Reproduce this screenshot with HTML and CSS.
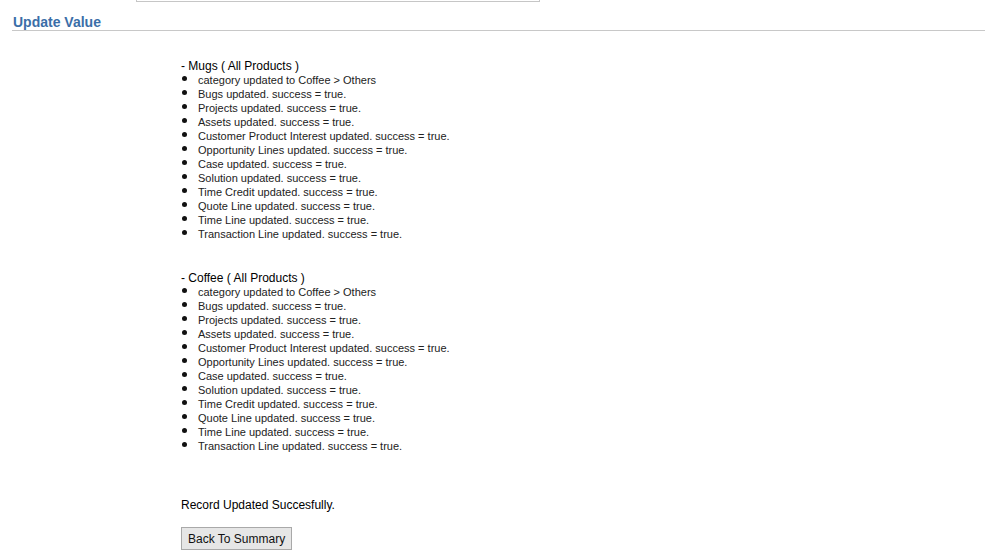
FILE: index.html
```html
<!DOCTYPE html>
<html lang="en">

<head>
    <meta charset="UTF-8">
    <title>Update Value</title>
    <link rel="stylesheet" href="styles.css">
</head>

<body>
    <div class="top_box"></div>

    <h2 class="section_title">Update Value</h2>

    <div class="results">
        <div class="product">
            <p class="product_name">- Mugs ( All Products )</p>
            <ul class="log">
                <li>category updated to Coffee &gt; Others</li>
                <li>Bugs updated. success = true.</li>
                <li>Projects updated. success = true.</li>
                <li>Assets updated. success = true.</li>
                <li>Customer Product Interest updated. success = true.</li>
                <li>Opportunity Lines updated. success = true.</li>
                <li>Case updated. success = true.</li>
                <li>Solution updated. success = true.</li>
                <li>Time Credit updated. success = true.</li>
                <li>Quote Line updated. success = true.</li>
                <li>Time Line updated. success = true.</li>
                <li>Transaction Line updated. success = true.</li>
            </ul>
        </div>

        <div class="product">
            <p class="product_name">- Coffee ( All Products )</p>
            <ul class="log">
                <li>category updated to Coffee &gt; Others</li>
                <li>Bugs updated. success = true.</li>
                <li>Projects updated. success = true.</li>
                <li>Assets updated. success = true.</li>
                <li>Customer Product Interest updated. success = true.</li>
                <li>Opportunity Lines updated. success = true.</li>
                <li>Case updated. success = true.</li>
                <li>Solution updated. success = true.</li>
                <li>Time Credit updated. success = true.</li>
                <li>Quote Line updated. success = true.</li>
                <li>Time Line updated. success = true.</li>
                <li>Transaction Line updated. success = true.</li>
            </ul>
        </div>

        <p class="done_msg">Record Updated Succesfully.</p>
        <button class="btn">Back To Summary</button>
    </div>
</body>

</html>
```

FILE: styles.css
```css
* {
    margin: 0;
    padding: 0;
    box-sizing: border-box;
}

body {
    font-family: "Liberation Sans", Arial, sans-serif;
    color: #000;
    background: #fff;
    padding: 0 19px 0 12px;
}

.top_box {
    margin-left: 124px;
    width: 404px;
    height: 2px;
    border: 1px solid #c6c6c6;
    border-top: none;
}

.section_title {
    font-size: 14px;
    font-weight: bold;
    color: #3a6ea8;
    padding: 12px 0 0 1px;
    line-height: 16px;
    border-bottom: 1px solid #c8c8c8;
}

.results {
    padding: 28px 0 0 169px;
}

.product {
    margin-bottom: 30px;
}

.product_name {
    font-size: 12px;
    line-height: 14px;
    color: #000;
}

.log {
    list-style: none;
}

.log li {
    position: relative;
    font-size: 11px;
    line-height: 14px;
    color: #222;
    padding-left: 17px;
}

.log li::before {
    content: "";
    position: absolute;
    left: 1px;
    top: 3px;
    width: 5px;
    height: 5px;
    border-radius: 50%;
    background: #111;
}

.done_msg {
    font-size: 12px;
    line-height: 15px;
    margin-top: 45px;
}

.btn {
    margin-top: 14px;
    font-family: "Liberation Sans", Arial, sans-serif;
    font-size: 12px;
    color: #111;
    background: #e6e6e6;
    border: 1px solid #a9a9a9;
    padding: 5px 6px 4px;
    line-height: 12px;
}
```
